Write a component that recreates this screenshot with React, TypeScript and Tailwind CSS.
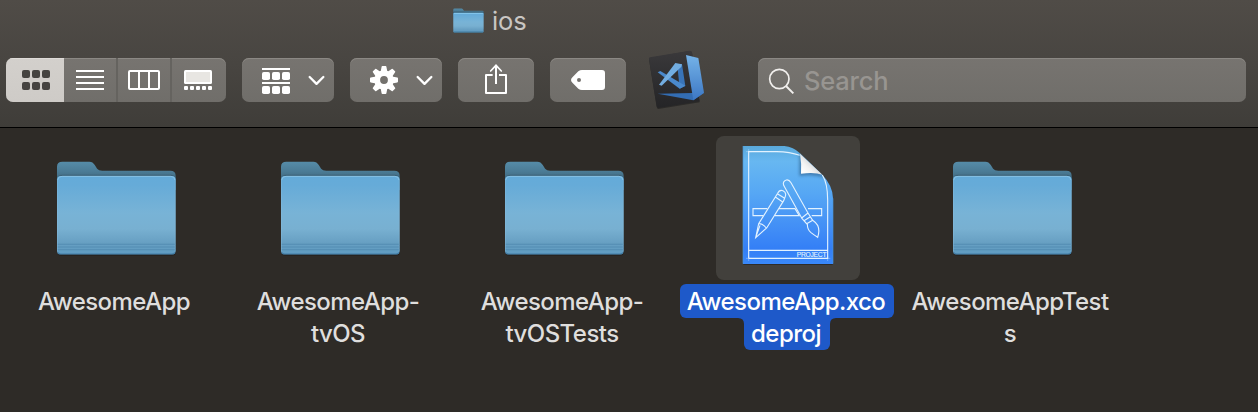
import React from "react";

function Folder({ id, className, compact = false }: { id: string; className: string; compact?: boolean }) {
  return (
    <svg viewBox="78 60 362 288" className={className} preserveAspectRatio="none">
      <defs>
        <linearGradient id={`${id}-back`} x1="0" y1="64" x2="0" y2="115" gradientUnits="userSpaceOnUse">
          <stop offset="0" stopColor="#568da9" />
          <stop offset="0.6" stopColor="#4b7b95" />
          <stop offset="1" stopColor="#41697f" />
        </linearGradient>
        <linearGradient id={`${id}-front`} x1="0" y1="107" x2="0" y2="342" gradientUnits="userSpaceOnUse">
          <stop offset="0" stopColor="#64abd9" />
          <stop offset="0.12" stopColor="#66abd8" />
          <stop offset="0.48" stopColor="#78b3d6" />
          <stop offset="0.68" stopColor="#78b0d1" />
          <stop offset="0.86" stopColor="#679fc2" />
          <stop offset="1" stopColor="#5f9cc2" />
        </linearGradient>
      </defs>
      <rect x="82" y="300" width="354" height="47" rx="10" fill="#000" opacity="0.22" />
      <path d="M81 150V80Q81 65 97 65H178Q188 65 194 75L201 86Q206 92 216 92H420Q436 92 436 107V150Z" fill={`url(#${id}-back)`} />
      <path d="M82 120V120Q82 106 98 106H420Q435 106 435 120" fill="none" stroke="#365568" strokeWidth={compact ? 10 : 4} opacity="0.5" />
      <rect x="81" y={compact ? 116 : 108} width="355" height={compact ? 227 : 235} rx="11" fill={`url(#${id}-front)`} />
      {compact ? (
        <>
          <path d="M90 124H427" stroke="#85c6ec" strokeWidth="11" />
          <path d="M88 336H430" stroke="#437c9f" strokeWidth="11" />
        </>
      ) : (
        <>
          <path d="M83 120Q84 109 96 109H421Q433 109 434 120" fill="none" stroke="#8fc6e7" strokeWidth="2.5" />
          <path d="M82 313H435M82 321H435M82 329H435" stroke="#4e86ad" strokeWidth="3" opacity="0.75" />
          <path d="M83 338Q86 342 92 342H425Q431 342 434 338" fill="none" stroke="#427da5" strokeWidth="3" />
          <path d="M82.5 120V335M434.5 120V335" stroke="#8cc0df" strokeWidth="2" opacity="0.5" />
        </>
      )}
    </svg>
  );
}

function ProjectIcon() {
  return (
    <svg viewBox="33 18 432 432" className="size-36">
      <defs>
        <linearGradient id="doc" x1="0" y1="48" x2="0" y2="402" gradientUnits="userSpaceOnUse">
          <stop offset="0" stopColor="#5aa9db" />
          <stop offset="0.13" stopColor="#67b7f1" />
          <stop offset="0.4" stopColor="#56a7f4" />
          <stop offset="0.72" stopColor="#408cf6" />
          <stop offset="0.87" stopColor="#347ff6" />
          <stop offset="1" stopColor="#3988fa" />
        </linearGradient>
        <linearGradient id="fold" x1="290" y1="128" x2="322" y2="96" gradientUnits="userSpaceOnUse">
          <stop offset="0" stopColor="#fff" />
          <stop offset="0.55" stopColor="#f2f2f2" />
          <stop offset="1" stopColor="#d5d8da" />
        </linearGradient>
        <filter id="soft" x="-20%" y="-20%" width="140%" height="140%">
          <feGaussianBlur stdDeviation="5" />
        </filter>
        <clipPath id="page">
          <path d="M114 48H238Q265 50 285 70L352 134Q384 168 384 205V402H114Z" />
        </clipPath>
      </defs>
      <rect x="115" y="390" width="268" height="15" fill="#000" opacity="0.3" />
      <path d="M114 48H238Q265 50 285 70L352 134Q384 168 384 205V402H114Z" fill="url(#doc)" />
      <g clipPath="url(#page)">
        <path d="M283 70L283 138Q325 132 362 144Z" fill="#123c66" opacity="0.45" filter="url(#soft)" />
      </g>
      <g fill="none" stroke="#e2f2ff" strokeWidth="3.4">
        <path d="M131 385V65H215Q255 66 284 76M352 135Q368 160 368 210V385H131M131 361H368" />
        <path d="M114 48V401M384 205V401" stroke="#4a94d4" strokeWidth="2" />
        <path d="M123 65H140M131 57V73M123 385H140M131 378V393M360 385H376M368 378V393" strokeWidth="1.5" opacity="0.7" />
        <path d="M187 236H144V257H174M222 236H270L283 257H210M309 236H350V257H320" />
        <path d="M218 190Q223 178 234 182Q245 187 241 199L236 212L185 294L152 323L161 281ZM217 191L239 205M211 201L232 215M161 281Q173 280 184 294M165 286L152 323" />
        <path d="M236 166Q232 154 244 150Q252 148 258 158L309 249L290 264ZM290 264L309 249L323 271L305 281ZM297 272L316 260M307 282Q307 299 318 308Q327 315 338 322Q345 302 338 286Q332 277 323 271" />
      </g>
      <path d="M285 71L352 134Q330 126 288 131Q290 100 285 71Z" fill="url(#fold)" />
      <text x="275" y="380" textLength="89" lengthAdjust="spacingAndGlyphs" fontFamily="Liberation Sans, Arial, sans-serif" fontSize="19" fill="#e2f2ff" stroke="#d9edff" strokeWidth="0.4">PROJECT</text>
    </svg>
  );
}

function VSCodeIcon() {
  return (
    <svg viewBox="36 27 180 186" className="ml-[21px] h-[62px] w-[60px]">
      <defs>
        <linearGradient id="board" x1="0" y1="0" x2="0" y2="1">
          <stop offset="0" stopColor="#3a393b" />
          <stop offset="1" stopColor="#242426" />
        </linearGradient>
        <linearGradient id="blue" x1="0" y1="0" x2="0" y2="1">
          <stop offset="0" stopColor="#75b3e8" />
          <stop offset="1" stopColor="#3c77c4" />
        </linearGradient>
      </defs>
      <path d="M45 54L164 33Q170 33 171 39L194 187L70 207Q66 207 65 201L42 59Q41 55 45 54Z" fill="#151516" opacity="0.5" />
      <path d="M45 52L164 32Q170 32 171 38L194 184L70 204Q66 204 65 199L42 57Q41 53 45 52Z" fill="url(#board)" />
      <path d="M122 73L141 73L151 138L134 146L128 86Z" fill="#3974b8" />
      <path d="M68 97L76 93L151 137L134 146Z" fill="#4a89cc" />
      <path d="M121 69L141 73L139 80L80 137L72 134Z" fill="#72ade1" />
      <path d="M68 161L172 159L207 159L175 181Z" fill="#336db3" />
      <path d="M153 45L190 54L207 158L175 181Z" fill="url(#blue)" />
    </svg>
  );
}

const surface = "bg-[linear-gradient(#777470,#706e6a)] shadow-[inset_0_1px_0_#8b8884]";

function Chevron() {
  return (
    <svg viewBox="234 90 51 33" className="h-[11px] w-[17px]">
      <path d="M239 96L259.500 116.500L280 96" fill="none" stroke="#fff" strokeWidth="7" strokeLinecap="round" strokeLinejoin="round" />
    </svg>
  );
}

function ViewSwitch() {
  return (
    <div className={`flex h-11 w-[220px] overflow-hidden rounded-[7px] ${surface}`}>
      <div className="flex w-[58px] items-center justify-center bg-[linear-gradient(#d3d0cc,#cecbc7)] pl-[2px] shadow-[inset_0_1px_0_#dedbd8]">
        <svg viewBox="66 75 84 60" className="h-5 w-7" fill="#454340">
          {[66, 96, 126].map((x) => [75, 111].map((y) => <rect key={`${x}-${y}`} x={x} y={y} width="24" height="24" rx="6" />))}
        </svg>
      </div>
      <div className="flex w-[54px] items-center justify-center border-r-2 border-[#65635f]">
        <svg viewBox="0 0 28 20" className="h-5 w-7" fill="#fff">
          {[0, 6, 12, 18].map((y) => <rect key={y} y={y} width="28" height="2" />)}
        </svg>
      </div>
      <div className="flex w-[54px] items-center justify-center border-r-2 border-[#65635f]">
        <svg viewBox="0 0 32 20" className="h-5 w-8" fill="none" stroke="#fff" strokeWidth="2">
          <rect x="1" y="1" width="30" height="18" rx="1" />
          <path d="M11 1V19M21 1V19" />
        </svg>
      </div>
      <div className="flex w-[54px] items-center justify-center pr-[2px]">
        <svg viewBox="0 0 28 20" className="h-5 w-7" fill="#fff">
          <rect width="28" height="14" rx="1.5" />
          <rect x="2" y="2" width="24" height="10" fill="#e8e6e2" />
          {[0, 6, 12, 18, 24].map((x) => <rect key={x} x={x} y="16" width="4" height="4" rx="1" />)}
        </svg>
      </div>
    </div>
  );
}

function Toolbar() {
  return (
    <div className="flex h-[66px] items-start pl-[6px]">
      <div className="pt-[9px]"><ViewSwitch /></div>
      <div className={`mt-[9px] ml-4 flex h-11 w-[92px] items-center rounded-[7px] pl-5 ${surface}`}>
        <svg viewBox="0 0 28 26" className="mt-[2px] h-[26px] w-7" fill="#fff">
          <rect width="28" height="2" />
          <rect y="14" width="28" height="2" />
          {[0, 10, 20].map((x) => [4, 18].map((y) => <rect key={`${x}-${y}`} x={x} y={y} width="8" height="8" rx="1.8" />))}
        </svg>
        <div className="ml-[18px] flex"><Chevron /></div>
      </div>
      <div className={`mt-[9px] ml-4 flex h-11 w-[92px] items-center rounded-[7px] pl-5 ${surface}`}>
        <svg viewBox="-14 -14 28 28" className="size-7">
          <g fill="#fff">
            {[0, 45, 90, 135, 180, 225, 270, 315].map((angle) => (
              <path key={angle} d="M-3.4 -8L-2.4 -13.3Q-2.3 -14 -1.6 -14H1.6Q2.3 -14 2.4 -13.3L3.4 -8Z" transform={`rotate(${angle})`} />
            ))}
          </g>
          <circle r="6.8" fill="none" stroke="#fff" strokeWidth="5.8" />
        </svg>
        <div className="ml-[18px] flex"><Chevron /></div>
      </div>
      <div className={`mt-[9px] ml-4 flex h-11 w-[76px] justify-center rounded-[7px] pt-[6px] ${surface}`}>
        <svg viewBox="135 57 66 90" className="h-[30px] w-[22px]" fill="none" stroke="#fff" strokeWidth="6">
          <path d="M158 90H138V144H198V90H177M168 117V62" strokeLinejoin="round" />
          <path d="M152 78L168 61L184 78" strokeLinecap="round" strokeLinejoin="miter" strokeWidth="5" />
        </svg>
      </div>
      <div className={`mt-[9px] ml-4 flex h-11 w-[76px] items-center justify-center rounded-[7px] ${surface}`}>
        <svg viewBox="393 75 102 60" className="h-5 w-[34px]">
          <path fillRule="evenodd" d="M426 75H486Q495 75 495 84V126Q495 135 486 135H426Q420 135 415 131L398 114Q388 105 398 96L415 79Q420 75 426 75ZM411 105a6 6 0 1 0 12 0a6 6 0 1 0-12 0Z" fill="#fff" />
        </svg>
      </div>
      <VSCodeIcon />
      <div className={`mt-[9px] ml-[51px] flex h-11 w-[488px] items-center rounded-[7px] pl-[10px] ${surface}`}>
        <svg viewBox="399 84 81 81" className="mt-[2px] size-[27px]" fill="none" stroke="#f1efed" strokeWidth="5">
          <circle cx="433" cy="117" r="29" />
          <path d="M453 138L475 160" strokeWidth="6" />
        </svg>
        <span className="mt-[2px] ml-[9px] text-[25.5px] leading-8 font-medium tracking-[-0.2px] text-[#989591]">Search</span>
      </div>
    </div>
  );
}

type Item = { lines: string[]; project?: boolean };

const items: Item[] = [
  { lines: ["AwesomeApp"] },
  { lines: ["AwesomeApp-", "tvOS"] },
  { lines: ["AwesomeApp-", "tvOSTests"] },
  { lines: ["AwesomeApp.xco", "deproj"], project: true },
  { lines: ["AwesomeAppTest", "s"] },
];

function FileItem({ item, index }: { item: Item; index: number }) {
  return (
    <div className="flex flex-col items-center">
      <div className={item.project ? "size-36 rounded-[8px] bg-[#42403c]" : "flex size-36 justify-center pt-6"}>
        {item.project ? <ProjectIcon /> : <Folder id={`folder-${index}`} className="h-24 w-[121px]" />}
      </div>
      {item.project ? (
        <div className="mt-1 mr-[2px] flex flex-col items-center text-white">
          <span className="flex h-[34px] w-[214px] items-center justify-center rounded-[6px] bg-[#1e59c9] pt-px pr-[2px]">{item.lines[0]}</span>
          <div className="flex">
            <svg viewBox="0 0 6 6" className="size-[6px]"><path d="M0 0H6V6Q6 0 0 0" fill="#1e59c9" /></svg>
            <span className="flex h-8 w-[86px] items-center justify-center rounded-b-[6px] bg-[#1e59c9] pr-[2px] pb-px">{item.lines[1]}</span>
            <svg viewBox="0 0 6 6" className="size-[6px]"><path d="M6 0H0V6Q0 0 6 0" fill="#1e59c9" /></svg>
          </div>
        </div>
      ) : (
        <div className="mt-[6px] mr-[4px] flex flex-col items-center">
          {item.lines.map((line) => <span key={line}>{line}</span>)}
        </div>
      )}
    </div>
  );
}

export default function App() {
  return (
    <div className="h-[412px] w-[1258px] overflow-hidden bg-[#2e2b27] font-['Inter','Liberation_Sans',sans-serif]">
      <header className="h-32 border-b border-black bg-[linear-gradient(#504c47,#484541_50%,#3f3d39)]">
        <div className="flex h-[49px] items-start pt-[5px] pl-[453px]">
          <Folder id="title-folder" compact className="mt-[3px] h-[25px] w-[31px]" />
          <span className="ml-2 text-[25.5px] leading-8 tracking-[-0.1px] text-[#c9c6c3]">ios</span>
        </div>
        <Toolbar />
      </header>
      <main className="grid grid-cols-[repeat(5,224px)] pt-2 pl-1 text-[24px] leading-8 font-medium tracking-[-0.55px] whitespace-nowrap text-[#dfdedd]">
        {items.map((item, index) => <FileItem key={item.lines.join("")} item={item} index={index} />)}
      </main>
    </div>
  );
}
